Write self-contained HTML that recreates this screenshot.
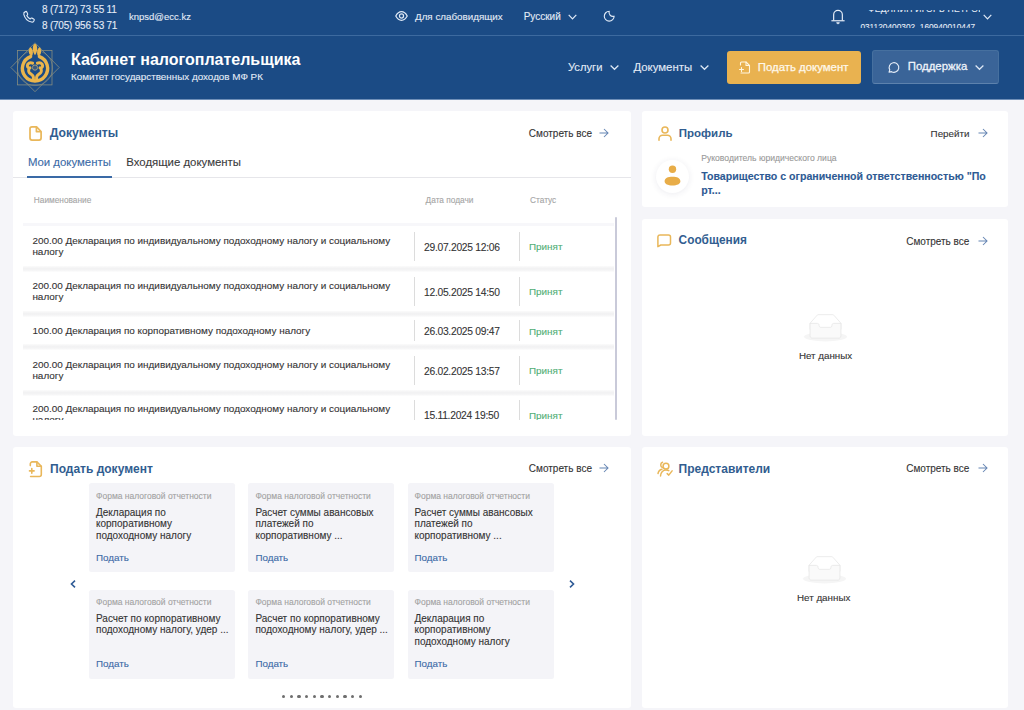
<!DOCTYPE html>
<html><head><meta charset="utf-8">
<style>
*{box-sizing:border-box;margin:0;padding:0}
html,body{width:1024px;height:710px;overflow:hidden}
body{background:#f5f5f9;font-family:"Liberation Sans",sans-serif;color:#333;position:relative;-webkit-text-stroke:0.1px currentColor}
.a{position:absolute}
.t{position:absolute;white-space:nowrap;line-height:1}
svg{position:absolute;overflow:visible}
#hdr{left:0;top:0;width:1024px;height:100px;background:#1b4b85}
#hline{left:0;top:35px;width:1024px;height:1px;background:#3d6a9f}
#hbot{left:0;top:99px;width:1024px;height:1px;background:#6f8fb8}
.wh{color:#e4ecf7}
.card{position:absolute;background:#fff;border-radius:3px}
.ttl{color:#315d90;font-weight:bold;-webkit-text-stroke:0}
.more{color:#333}
.gold{stroke:#e9b75a}
.lbl{color:#a5a5a5}
.row{position:absolute;left:23px;width:591px;background:#fff}
.band{position:absolute;left:23px;width:591px;height:6px;background:linear-gradient(#fbfbfb,#f2f2f3 40%,#f3f3f4 65%,#fdfdfd)}
.dv{position:absolute;width:1px;background:#dcdcdc}
.ok{color:#4fae74}
.tile{position:absolute;width:146px;height:89px;background:#f4f4f8;border-radius:2.5px}
.tl1{color:#a2a2a2;font-size:8.5px}
.tl2{color:#333;font-size:10px;line-height:11.5px;white-space:normal;position:absolute}
.lnk{color:#3b69a6}
.rt{color:#333;font-size:9.93px}
</style></head><body>
<div id="hdr" class="a"></div>
<div id="hline" class="a"></div>
<div id="hbot" class="a"></div>

<!-- top bar -->
<svg style="left:22.8px;top:10.7px" width="12.4" height="12" viewBox="0 0 21 20" fill="none" stroke="#dfe9f6" stroke-width="1.9" stroke-linejoin="round"><path d="M3.6 1.3c-1.6.5-2.6 2.2-2.2 4.1c1.5 6 7 11.7 13 13.2c2 .5 3.7-.4 4.2-2l.4-1.3c.3-.8-.1-1.6-.9-2l-3-1.4c-.7-.3-1.5-.2-2 .4l-1 1.1c-2.5-1.2-4.6-3.3-5.8-5.8l1.1-1c.6-.5.7-1.3.4-2l-1.4-3c-.4-.8-1.2-1.2-2-.9z"/></svg>
<div class="t wh" style="left:42px;top:4.8px;font-size:10px;letter-spacing:-0.22px">8 (7172) 73 55 11</div>
<div class="t wh" style="left:42px;top:20.7px;font-size:10px;letter-spacing:-0.22px">8 (705) 956 53 71</div>
<div class="t wh" style="left:129px;top:12px;font-size:9.5px">knpsd@ecc.kz</div>

<svg style="left:394.8px;top:10.8px" width="13" height="10" viewBox="0 0 27 21" fill="none" stroke="#dfe9f6" stroke-width="2.6"><path d="M1.5 10.5C5 4 9 1.5 13.5 1.5S22 4 25.5 10.5C22 17 18 19.5 13.5 19.5S5 17 1.5 10.5Z"/><circle cx="13.5" cy="10.5" r="4.3"/></svg>
<div class="t wh" style="left:415px;top:11.7px;font-size:9.8px">Для слабовидящих</div>
<div class="t wh" style="left:523.7px;top:12.3px;font-size:10px">Русский</div>
<svg style="left:568px;top:14px" width="9" height="6" viewBox="0 0 9 6" fill="none" stroke="#dfe9f6" stroke-width="1.2"><path d="M0.7 0.8L4.5 4.8L8.3 0.8"/></svg>
<svg style="left:603.3px;top:9.8px" width="12.4" height="12.4" viewBox="0 0 24 24" fill="none" stroke="#dfe9f6" stroke-width="2.2" stroke-linecap="round" stroke-linejoin="round"><path d="M12 2.5a7.5 7.5 0 0 0 9.5 9.5a9.5 9.5 0 1 1 -9.5 -9.5"/></svg>

<svg style="left:831px;top:9px" width="14" height="16" viewBox="0 0 28 32" fill="none" stroke="#e4ecf7" stroke-width="2.4" stroke-linejoin="round"><path d="M5.3 23V11.5a8.7 8.7 0 0 1 17.4 0V23"/><path d="M0.8 23.5h26.4"/><path d="M11.2 27.2a2.8 2.4 0 0 0 5.6 0z" fill="#e4ecf7" stroke-width="1.2"/></svg>
<div class="a" style="left:855px;top:10px;width:125px;height:18.2px;overflow:hidden">
  <div class="t wh" style="left:13px;top:-4.6px;font-size:8.6px;letter-spacing:0.25px">ФЕДЯНИН ИГОРЬ ПЕТРОВИЧ</div>
  <div class="t wh" style="left:5.4px;top:13.2px;font-size:8.3px">031120400302_160940010447</div>
</div>
<svg style="left:982.5px;top:13.5px" width="9" height="6" viewBox="0 0 9 6" fill="none" stroke="#dfe9f6" stroke-width="1.2"><path d="M0.7 0.8L4.5 4.8L8.3 0.8"/></svg>

<!-- logo -->
<svg style="left:10px;top:42px" width="50" height="50" viewBox="0 0 50 50">
  <g fill="none" stroke="#8d917f" stroke-width="0.75">
    <rect x="7.5" y="8.4" width="34.5" height="34.5"/>
    <path d="M25 0.8L49.2 25.5L25 49.7L0.9 25.5Z"/>
    <circle cx="25" cy="26" r="17.6" stroke-width="0.6"/>
  </g>
  <g fill="none" stroke="#eab54c" stroke-linecap="round">
    <path d="M20.6 14.6A12.6 12.6 0 1 0 29.4 14.6" stroke-width="3.4"/>
  </g>
  <g fill="#eab54c">
    <path d="M25 1.8c1.5 0 2.2 2.5 2.2 5c0 2.5-.8 4.5-2.2 6.5c-1.4-2-2.2-4-2.2-6.5c0-2.5.7-5 2.2-5z"/>
    <path d="M20 5.2c1.7.3 2.8 2.7 2.9 4.8c.1 1.5-.3 3-.9 4l-2.6-1.8c-.8-2-.8-4.8.6-7z"/>
    <path d="M30 5.2c-1.7.3-2.8 2.7-2.9 4.8c-.1 1.5.3 3 .9 4l2.6-1.8c.8-2 .8-4.8-.6-7z"/>
  </g>
  <g fill="none" stroke="#eab54c" stroke-width="3" stroke-linecap="round" stroke-linejoin="round">
    <path d="M22.6 21.2c-2.5-1.2-5 0-5.2 2.3c-.2 2 1.5 3 2.6 2.4c-1.6 1.2-1.8 3.4-.6 4.8c1.2 1.3 2.5 1.6 3.5 3.2c.6 1 .7 2.4.5 3.6"/>
    <path d="M27.4 21.2c2.5-1.2 5 0 5.2 2.3c.2 2-1.5 3-2.6 2.4c1.6 1.2 1.8 3.4.6 4.8c-1.2 1.3-2.5 1.6-3.5 3.2c-.6 1-.7 2.4-.5 3.6"/>
  </g>
  <circle cx="25" cy="25.6" r="2.6" fill="#3c5a7e" stroke="#a09a7a" stroke-width="1"/>
</svg>
<div class="t" style="left:71px;top:51.5px;font-size:16px;font-weight:bold;color:#fff;-webkit-text-stroke:0">Кабинет налогоплательщика</div>
<div class="t wh" style="left:71px;top:71.6px;font-size:9.85px">Комитет государственных доходов МФ РК</div>

<div class="t wh" style="left:568px;top:62px;font-size:11.2px">Услуги</div>
<svg style="left:610.3px;top:65px" width="9" height="5" viewBox="0 0 9 5" fill="none" stroke="#dfe9f6" stroke-width="1.2"><path d="M0.6 0.5L4.5 4.3L8.4 0.5"/></svg>
<div class="t wh" style="left:633.4px;top:62px;font-size:11.4px">Документы</div>
<svg style="left:699.8px;top:65px" width="9" height="5" viewBox="0 0 9 5" fill="none" stroke="#dfe9f6" stroke-width="1.2"><path d="M0.6 0.5L4.5 4.3L8.4 0.5"/></svg>

<div class="a" style="left:727px;top:50.5px;width:134px;height:33.5px;background:#e9b250;border-radius:3px"></div>
<svg style="left:739px;top:61px" width="12" height="13" viewBox="0 0 24 26" fill="none" stroke="#fff6e0" stroke-width="2.2" stroke-linecap="round" stroke-linejoin="round"><path d="M3 8V4a2 2 0 0 1 2-2h9l7 7v13a2 2 0 0 1-2 2H4"/><path d="M14 2v7h7"/><path d="M5 13v8M1 17h8"/></svg>
<div class="t" style="left:757.8px;top:61.5px;font-size:11.4px;color:#fff8ea;-webkit-text-stroke:0.25px #fff8ea">Подать документ</div>

<div class="a" style="left:871.5px;top:50px;width:127px;height:34px;background:#3a6498;border-radius:3px;border:1px solid #46709f;border-bottom-color:#5d82ad"></div>
<svg style="left:887.5px;top:61px" width="12.2" height="12.2" viewBox="0 0 24 24" fill="none" stroke="#e4ecf7" stroke-width="2.2" stroke-linejoin="round"><path d="M2 22l1.5-4.5A9.5 9.5 0 1 1 7 21z"/></svg>
<div class="t" style="left:907.8px;top:61.2px;font-size:11.4px;color:#eef3fa;-webkit-text-stroke:0.3px #eef3fa">Поддержка</div>
<svg style="left:975px;top:65.3px" width="9" height="5" viewBox="0 0 9 5" fill="none" stroke="#dfe9f6" stroke-width="1.2"><path d="M0.6 0.5L4.5 4.3L8.4 0.5"/></svg>

<!-- CARDS -->
<div class="card" style="left:13px;top:111px;width:618px;height:325px"></div>
<div class="card" style="left:642px;top:111px;width:366px;height:96px"></div>
<div class="card" style="left:642px;top:219px;width:366px;height:217px"></div>
<div class="card" style="left:13px;top:446.5px;width:618px;height:261.5px"></div>
<div class="card" style="left:642px;top:446.5px;width:366px;height:261.5px"></div>
<!-- documents card content -->
<svg style="left:29px;top:126px" width="13" height="15" viewBox="0 0 13 15" fill="none" class="gold" stroke-width="1.7" stroke-linejoin="round"><path d="M3 0.9h4.6l4.5 4.6v6.6a2 2 0 0 1-2 2H3a2 2 0 0 1-2-2V2.9a2 2 0 0 1 2-2z"/><path d="M7.4 1v4.6h4.6" /></svg>
<div class="t ttl" style="left:49.7px;top:127.4px;font-size:12.2px">Документы</div>
<div class="t more" style="left:528.8px;top:128.9px;font-size:10px">Смотреть все</div>
<svg style="left:599px;top:128px" width="10" height="10" viewBox="0 0 10 10" fill="none" stroke="#6585b3" stroke-width="1.05"><path d="M0.5 5h8.5M5 1l4 4-4 4"/></svg>
<div class="t" style="left:27.9px;top:157px;font-size:11.4px;color:#3a6aa6">Мои документы</div>
<div class="t" style="left:126.3px;top:157px;font-size:11.4px;color:#3a3a3a">Входящие документы</div>
<div class="a" style="left:13px;top:177px;width:618px;height:1px;background:#e6e6ea"></div>
<div class="a" style="left:27px;top:176px;width:85px;height:2px;background:#3a6aa6"></div>
<div class="t lbl" style="left:33.8px;top:195.5px;font-size:8.3px">Наименование</div>
<div class="t lbl" style="left:425.6px;top:195.5px;font-size:8.3px">Дата подачи</div>
<div class="t lbl" style="left:530px;top:195.5px;font-size:8.3px">Статус</div>
<div class="a" style="left:23px;top:223px;width:591px;height:2.5px;background:#f7f7fa"></div>
<div class="a" style="left:13px;top:224.5px;width:618px;height:195.5px;overflow:hidden">
<div class="band" style="left:10px;top:41.0px"></div>
<div class="t rt" style="left:19.4px;top:11.0px">200.00 Декларация по индивидуальному подоходному налогу и социальному</div>
<div class="t rt" style="left:19.4px;top:22.0px">налогу</div>
<div class="dv" style="left:400.5px;top:7.2px;height:29.0px"></div>
<div class="dv" style="left:505.5px;top:7.2px;height:29.0px"></div>
<div class="t rt" style="left:411px;top:18.1px;font-size:10.3px;letter-spacing:-0.28px">29.07.2025 12:06</div>
<div class="t ok" style="left:516px;top:17.6px;font-size:9.9px">Принят</div>
<div class="band" style="left:10px;top:86.0px"></div>
<div class="t rt" style="left:19.4px;top:56.5px">200.00 Декларация по индивидуальному подоходному налогу и социальному</div>
<div class="t rt" style="left:19.4px;top:67.5px">налогу</div>
<div class="dv" style="left:400.5px;top:52.6px;height:28.7px"></div>
<div class="dv" style="left:505.5px;top:52.6px;height:28.7px"></div>
<div class="t rt" style="left:411px;top:63.3px;font-size:10.3px;letter-spacing:-0.28px">12.05.2025 14:50</div>
<div class="t ok" style="left:516px;top:62.8px;font-size:9.9px">Принят</div>
<div class="band" style="left:10px;top:119.8px"></div>
<div class="t rt" style="left:19.4px;top:101.3px">100.00 Декларация по корпоративному подоходному налогу</div>
<div class="dv" style="left:400.5px;top:95.8px;height:21.0px"></div>
<div class="dv" style="left:505.5px;top:95.8px;height:21.0px"></div>
<div class="t rt" style="left:411px;top:102.6px;font-size:10.3px;letter-spacing:-0.28px">26.03.2025 09:47</div>
<div class="t ok" style="left:516px;top:102.1px;font-size:9.9px">Принят</div>
<div class="band" style="left:10px;top:165.3px"></div>
<div class="t rt" style="left:19.4px;top:135.3px">200.00 Декларация по индивидуальному подоходному налогу и социальному</div>
<div class="t rt" style="left:19.4px;top:146.3px">налогу</div>
<div class="dv" style="left:400.5px;top:131.5px;height:29.0px"></div>
<div class="dv" style="left:505.5px;top:131.5px;height:29.0px"></div>
<div class="t rt" style="left:411px;top:142.4px;font-size:10.3px;letter-spacing:-0.28px">26.02.2025 13:57</div>
<div class="t ok" style="left:516px;top:141.9px;font-size:9.9px">Принят</div>
<div class="band" style="left:10px;top:209.7px"></div>
<div class="t rt" style="left:19.4px;top:179.7px">200.00 Декларация по индивидуальному подоходному налогу и социальному</div>
<div class="t rt" style="left:19.4px;top:190.7px">налогу</div>
<div class="dv" style="left:400.5px;top:175.9px;height:29.0px"></div>
<div class="dv" style="left:505.5px;top:175.9px;height:29.0px"></div>
<div class="t rt" style="left:411px;top:186.8px;font-size:10.3px;letter-spacing:-0.28px">15.11.2024 19:50</div>
<div class="t ok" style="left:516px;top:186.2px;font-size:9.9px">Принят</div>
</div>
<div class="a" style="left:615px;top:217px;width:2.2px;height:203px;background:#c9cad9;border-radius:1px"></div>
<!-- profile -->
<svg style="left:658px;top:126px" width="14" height="15" viewBox="0 0 14 15" fill="none" class="gold" stroke-width="1.6" stroke-linecap="round"><circle cx="7" cy="4" r="3"/><path d="M1 14.2v-1.5a3.5 3.5 0 0 1 3.5-3.5h5a3.5 3.5 0 0 1 3.5 3.5v1.5"/></svg>
<div class="t ttl" style="left:678.7px;top:127.7px;font-size:11.5px">Профиль</div>
<div class="t more" style="left:930.6px;top:128.5px;font-size:9.8px">Перейти</div>
<svg style="left:977.5px;top:128px" width="10" height="10" viewBox="0 0 10 10" fill="none" stroke="#6585b3" stroke-width="1.05"><path d="M0.5 5h8.5M5 1l4 4-4 4"/></svg>
<div class="a" style="left:655.5px;top:159.5px;width:33px;height:33px;border-radius:50%;background:#fff;box-shadow:0 1px 6px rgba(40,40,90,0.09)"></div>
<svg style="left:663px;top:164px" width="19" height="22" viewBox="0 0 19 22" fill="#e8ad48"><circle cx="9.5" cy="5.2" r="3.7"/><path d="M1.6 17.2c0-3.2 3.3-4.5 7.9-4.5s7.9 1.3 7.9 4.5c0 2.8-3.3 4.2-7.9 4.2s-7.9-1.4-7.9-4.2z"/></svg>
<div class="t lbl" style="left:701.2px;top:154px;font-size:8.6px;color:#999">Руководитель юридического лица</div>
<div class="t" style="left:701.2px;top:170.6px;font-size:10.6px;font-weight:bold;color:#2d5a94">Товарищество с ограниченной ответственностью "По</div>
<div class="t" style="left:701.2px;top:184.6px;font-size:10.6px;font-weight:bold;color:#2d5a94">рт...</div>
<!-- messages -->
<svg style="left:657px;top:234px" width="15" height="14" viewBox="0 0 15 14" fill="none" class="gold" stroke-width="1.5" stroke-linejoin="round"><path d="M2.8 0.9h8.7a2 2 0 0 1 2 2v6.1a2 2 0 0 1-2 2H3.8L0.9 12.7V2.9a2 2 0 0 1 2-2z"/></svg>
<div class="t ttl" style="left:678.6px;top:235.4px;font-size:11.85px">Сообщения</div>
<div class="t more" style="left:906.2px;top:236.5px;font-size:10px">Смотреть все</div>
<svg style="left:977.5px;top:235.5px" width="10" height="10" viewBox="0 0 10 10" fill="none" stroke="#6585b3" stroke-width="1.05"><path d="M0.5 5h8.5M5 1l4 4-4 4"/></svg>
<svg style="left:803.5px;top:314.3px" width="43" height="27.5" viewBox="0 0 64 41"><g transform="translate(0 1)" fill="none" fill-rule="evenodd"><ellipse fill="#f5f5f5" cx="32" cy="33" rx="32" ry="7"/><g fill-rule="nonzero" stroke="#e3e3e3"><path d="M55 12.76L44.854 1.258C44.367.474 43.656 0 42.907 0H21.093c-.749 0-1.46.474-1.947 1.257L9 12.761V22h46v-9.24z"/><path d="M41.613 15.931c0-1.605.994-2.93 2.227-2.931H55v18.137C55 33.26 53.68 35 52.05 35h-40.1C10.32 35 9 33.259 9 31.137V13h11.16c1.233 0 2.227 1.323 2.227 2.928v.022c0 1.605 1.005 2.901 2.237 2.901h14.752c1.232 0 2.237-1.308 2.237-2.913v-.007z" fill="#fafafa"/></g></g></svg>
<div class="t" style="left:798.9px;top:350.7px;font-size:9.8px;color:#333">Нет данных</div>
<!-- representatives -->
<svg style="left:656.5px;top:460.5px" width="16" height="16" viewBox="0 0 16 16" fill="none" class="gold" stroke-width="1.5" stroke-linecap="round" stroke-linejoin="round"><path d="M5.5 6.5a2.8 2.8 0 0 1 0-5.2"/><circle cx="9" cy="5.2" r="2.9"/><path d="M1 12.5c0.5-2.5 2-4 4-4.3"/><path d="M3.5 15c0-3.5 2.5-6 5.5-6c1 0 2 .2 2.8.7"/><path d="M10.2 12.6l1.6 1.5l3.3-4.2"/></svg>
<div class="t ttl" style="left:678.6px;top:462.9px;font-size:12px">Представители</div>
<div class="t more" style="left:906.2px;top:464px;font-size:10px">Смотреть все</div>
<svg style="left:977.5px;top:463px" width="10" height="10" viewBox="0 0 10 10" fill="none" stroke="#6585b3" stroke-width="1.05"><path d="M0.5 5h8.5M5 1l4 4-4 4"/></svg>
<svg style="left:802.5px;top:555.5px" width="43" height="27.5" viewBox="0 0 64 41"><g transform="translate(0 1)" fill="none" fill-rule="evenodd"><ellipse fill="#f5f5f5" cx="32" cy="33" rx="32" ry="7"/><g fill-rule="nonzero" stroke="#e3e3e3"><path d="M55 12.76L44.854 1.258C44.367.474 43.656 0 42.907 0H21.093c-.749 0-1.46.474-1.947 1.257L9 12.761V22h46v-9.24z"/><path d="M41.613 15.931c0-1.605.994-2.93 2.227-2.931H55v18.137C55 33.26 53.68 35 52.05 35h-40.1C10.32 35 9 33.259 9 31.137V13h11.16c1.233 0 2.227 1.323 2.227 2.928v.022c0 1.605 1.005 2.901 2.237 2.901h14.752c1.232 0 2.237-1.308 2.237-2.913v-.007z" fill="#fafafa"/></g></g></svg>
<div class="t" style="left:797px;top:593px;font-size:9.8px;color:#333">Нет данных</div>
<!-- submit -->
<svg style="left:28.5px;top:460.5px" width="14" height="17" viewBox="0 0 14 17" fill="none" class="gold" stroke-width="1.6" stroke-linecap="round" stroke-linejoin="round"><path d="M1.3 4.6V2.9a2 2 0 0 1 2-2h4.6l4.4 4.4v8.2a2 2 0 0 1-2 2H1.6"/><path d="M7.9 1.1v4.2h4.3"/><path d="M2.8 7.6v4.6M0.5 9.9h4.6"/></svg>
<div class="t ttl" style="left:50px;top:462.9px;font-size:12px">Подать документ</div>
<div class="t more" style="left:528.8px;top:464px;font-size:10px">Смотреть все</div>
<svg style="left:599px;top:463px" width="10" height="10" viewBox="0 0 10 10" fill="none" stroke="#6585b3" stroke-width="1.05"><path d="M0.5 5h8.5M5 1l4 4-4 4"/></svg>
<div class="tile" style="left:89px;top:483.4px"></div>
<div class="t tl1" style="left:96px;top:492.0px">Форма налоговой отчетности</div>
<div class="t rt" style="left:96px;top:507.5px;font-size:10px">Декларация по</div>
<div class="t rt" style="left:96px;top:519.0px;font-size:10px">корпоративному</div>
<div class="t rt" style="left:96px;top:530.5px;font-size:10px">подоходному налогу</div>
<div class="t lnk" style="left:96px;top:552.9px;font-size:9.8px">Подать</div>
<div class="tile" style="left:248.4px;top:483.4px"></div>
<div class="t tl1" style="left:255.4px;top:492.0px">Форма налоговой отчетности</div>
<div class="t rt" style="left:255.4px;top:507.5px;font-size:10px">Расчет суммы авансовых</div>
<div class="t rt" style="left:255.4px;top:519.0px;font-size:10px">платежей по</div>
<div class="t rt" style="left:255.4px;top:530.5px;font-size:10px">корпоративному ...</div>
<div class="t lnk" style="left:255.4px;top:552.9px;font-size:9.8px">Подать</div>
<div class="tile" style="left:407.5px;top:483.4px"></div>
<div class="t tl1" style="left:414.5px;top:492.0px">Форма налоговой отчетности</div>
<div class="t rt" style="left:414.5px;top:507.5px;font-size:10px">Расчет суммы авансовых</div>
<div class="t rt" style="left:414.5px;top:519.0px;font-size:10px">платежей по</div>
<div class="t rt" style="left:414.5px;top:530.5px;font-size:10px">корпоративному ...</div>
<div class="t lnk" style="left:414.5px;top:552.9px;font-size:9.8px">Подать</div>
<div class="tile" style="left:89px;top:589.5px"></div>
<div class="t tl1" style="left:96px;top:598.1px">Форма налоговой отчетности</div>
<div class="t rt" style="left:96px;top:613.6px;font-size:10px">Расчет по корпоративному</div>
<div class="t rt" style="left:96px;top:625.1px;font-size:10px">подоходному налогу, удер ...</div>
<div class="t lnk" style="left:96px;top:659.0px;font-size:9.8px">Подать</div>
<div class="tile" style="left:248.4px;top:589.5px"></div>
<div class="t tl1" style="left:255.4px;top:598.1px">Форма налоговой отчетности</div>
<div class="t rt" style="left:255.4px;top:613.6px;font-size:10px">Расчет по корпоративному</div>
<div class="t rt" style="left:255.4px;top:625.1px;font-size:10px">подоходному налогу, удер ...</div>
<div class="t lnk" style="left:255.4px;top:659.0px;font-size:9.8px">Подать</div>
<div class="tile" style="left:407.5px;top:589.5px"></div>
<div class="t tl1" style="left:414.5px;top:598.1px">Форма налоговой отчетности</div>
<div class="t rt" style="left:414.5px;top:613.6px;font-size:10px">Декларация по</div>
<div class="t rt" style="left:414.5px;top:625.1px;font-size:10px">корпоративному</div>
<div class="t rt" style="left:414.5px;top:636.6px;font-size:10px">подоходному налогу</div>
<div class="t lnk" style="left:414.5px;top:659.0px;font-size:9.8px">Подать</div>
<svg style="left:69.5px;top:580px" width="6" height="8" viewBox="0 0 6 8" fill="none" stroke="#2f5b96" stroke-width="1.6"><path d="M5 0.7L1.5 4L5 7.3"/></svg>
<svg style="left:568.5px;top:580px" width="6" height="8" viewBox="0 0 6 8" fill="none" stroke="#2f5b96" stroke-width="1.6"><path d="M1 0.7L4.5 4L1 7.3"/></svg>
<div class="a" style="left:281.8px;top:694.5px;width:3.6px;height:3.6px;border-radius:50%;background:#6e6e6e"></div>
<div class="a" style="left:289.5px;top:694.5px;width:3.6px;height:3.6px;border-radius:50%;background:#6e6e6e"></div>
<div class="a" style="left:297.2px;top:694.5px;width:3.6px;height:3.6px;border-radius:50%;background:#6e6e6e"></div>
<div class="a" style="left:304.8px;top:694.5px;width:3.6px;height:3.6px;border-radius:50%;background:#6e6e6e"></div>
<div class="a" style="left:312.5px;top:694.5px;width:3.6px;height:3.6px;border-radius:50%;background:#6e6e6e"></div>
<div class="a" style="left:320.2px;top:694.5px;width:3.6px;height:3.6px;border-radius:50%;background:#6e6e6e"></div>
<div class="a" style="left:327.9px;top:694.5px;width:3.6px;height:3.6px;border-radius:50%;background:#6e6e6e"></div>
<div class="a" style="left:335.6px;top:694.5px;width:3.6px;height:3.6px;border-radius:50%;background:#6e6e6e"></div>
<div class="a" style="left:343.2px;top:694.5px;width:3.6px;height:3.6px;border-radius:50%;background:#6e6e6e"></div>
<div class="a" style="left:350.9px;top:694.5px;width:3.6px;height:3.6px;border-radius:50%;background:#6e6e6e"></div>
<div class="a" style="left:358.6px;top:694.5px;width:3.6px;height:3.6px;border-radius:50%;background:#6e6e6e"></div>
</body></html>
